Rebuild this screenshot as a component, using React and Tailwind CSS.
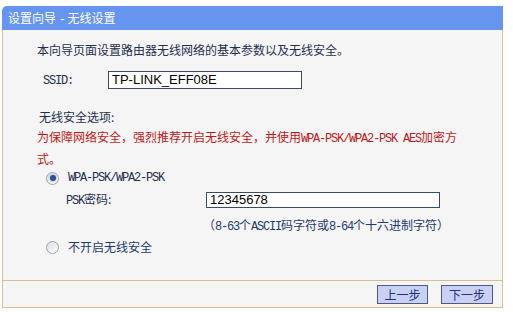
import React from 'react'

const cjk = { fontFamily: '"Noto Sans CJK SC", "Noto Sans", sans-serif' }

const Mono = ({ children }) => (
  <span className="font-['Liberation_Mono',monospace] tracking-[-1.2px]">{children}</span>
)

const Radio = ({ checked }) => (
  <span className="w-[13px] h-[13px] rounded-full border border-[#9aa3b0] bg-gradient-to-br from-[#d8dce2] to-[#ffffff] flex items-center justify-center shrink-0">
    {checked && <span className="w-[6px] h-[6px] rounded-full bg-[#2f4f8f] shadow-[0_0_2px_#6f8fcf]" />}
  </span>
)

const App = () => {
  return (
    <div className="w-[513px] h-[312px] bg-white pt-[6px] pl-[2px] text-[12px] text-[#1f2f50]" style={cjk}>
      <div className="w-[501px]">
        {/* title bar */}
        <div className="h-[24px] bg-[#6595ee] rounded-tl-[5px] text-white pl-[6px] leading-[24px]">
          设置向导 <Mono>-</Mono> 无线设置
        </div>

        {/* body */}
        <div className="h-[251px] bg-[#f5f5f5] border-x border-b border-[#dcbc8e] pl-[34px] pt-[12px] leading-[16px]">
          <p>本向导页面设置路由器无线网络的基本参数以及无线安全。</p>

          <div className="flex items-center mt-[13px] h-[18px]">
            <span className="w-[71px] pl-[6px]"><Mono>SSID:</Mono></span>
            <div className="w-[194px] h-[18px] border border-[#3b4a5e] bg-white pl-[3px] leading-[16px] text-[13px] text-black font-['Liberation_Sans',sans-serif]">
              TP-LINK_EFF08E
            </div>
          </div>

          <p className="mt-[20px] pl-[2px]">无线安全选项:</p>
          <p className="mt-[2px] leading-[19px] text-[#c01818]">
            为保障网络安全，强烈推荐开启无线安全，并使用<Mono>WPA-PSK/WPA2-PSK AES</Mono>加密方
            <br />
            式。
          </p>

          <div className="flex items-center gap-[9px] mt-[1px] h-[18px] pl-[9px]">
            <Radio checked />
            <Mono>WPA-PSK/WPA2-PSK</Mono>
          </div>

          <div className="flex items-center mt-[5px] h-[16px]">
            <span className="w-[169px] pl-[29px]"><Mono>PSK</Mono>密码:</span>
            <div className="w-[234px] h-[16px] border border-[#3b4a5e] bg-white pl-[3px] leading-[14px] text-[13px] text-black font-['Liberation_Sans',sans-serif]">
              12345678
            </div>
          </div>

          <p className="mt-[9px] pl-[166px] text-[#1e3a70]">
            （<Mono>8-63</Mono>个<Mono>ASCII</Mono>码字符或<Mono>8-64</Mono>个十六进制字符）
          </p>

          <div className="flex items-center gap-[9px] mt-[3px] h-[18px] pl-[9px] text-[#1e3a70]">
            <Radio />
            <span>不开启无线安全</span>
          </div>
        </div>

        {/* footer */}
        <div className="h-[27px] bg-[#f5f5f5] border-x border-b border-[#dcbc8e] flex items-center justify-end gap-[13px] pr-[9px]">
          <button className="w-[51px] h-[19px] bg-[#c9d0f4] border border-[#4a5a80] text-[#22336f] text-[12px] leading-[17px]">上一步</button>
          <button className="w-[52px] h-[19px] bg-[#c9d0f4] border border-[#4a5a80] text-[#22336f] text-[12px] leading-[17px]">下一步</button>
        </div>
      </div>
    </div>
  )
}

export default App
